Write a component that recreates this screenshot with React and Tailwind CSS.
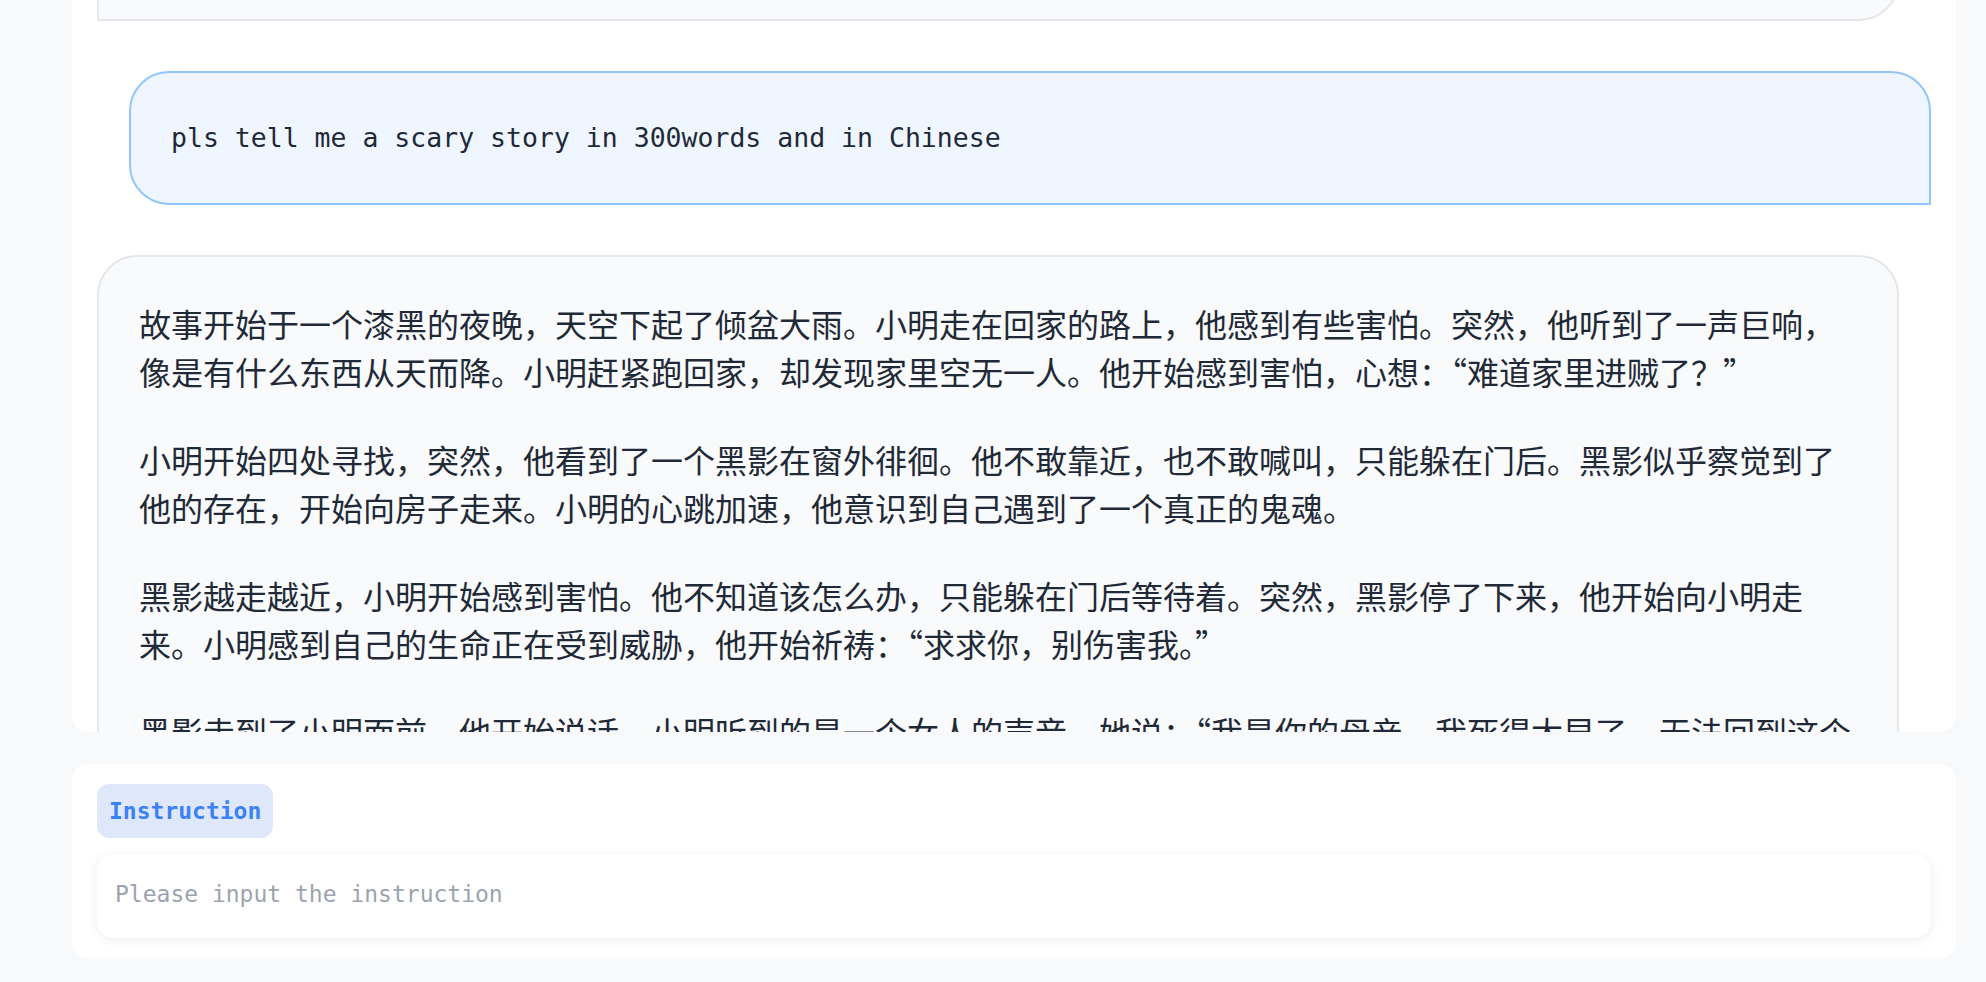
import React, { useState } from 'react';

const story = [
  '故事开始于一个漆黑的夜晚，天空下起了倾盆大雨。小明走在回家的路上，他感到有些害怕。突然，他听到了一声巨响，像是有什么东西从天而降。小明赶紧跑回家，却发现家里空无一人。他开始感到害怕，心想：“难道家里进贼了？”',
  '小明开始四处寻找，突然，他看到了一个黑影在窗外徘徊。他不敢靠近，也不敢喊叫，只能躲在门后。黑影似乎察觉到了他的存在，开始向房子走来。小明的心跳加速，他意识到自己遇到了一个真正的鬼魂。',
  '黑影越走越近，小明开始感到害怕。他不知道该怎么办，只能躲在门后等待着。突然，黑影停了下来，他开始向小明走来。小明感到自己的生命正在受到威胁，他开始祈祷：“求求你，别伤害我。”',
  '黑影走到了小明面前，他开始说话。小明听到的是一个女人的声音。她说：“我是你的母亲，我死得太早了，无法回到这个世界。我只是想再看你一眼。”小明愣住了，泪水从他的眼中流了下来。',
];

const App = () => {
  const [instruction, setInstruction] = useState('');

  return (
    <div className="h-[982px] bg-[#f8f9fb] pl-[72px] pr-[30px] flex flex-col overflow-hidden">
      {/* chat history, scrolled */}
      <div className="h-[732px] shrink-0 bg-white rounded-b-[16px] overflow-hidden">
        <div className="flex flex-col gap-[50px] px-[25px] -mt-[200px]">
          <div className="h-[221px] mr-[32px] bg-[#f9fafb] border-2 border-[#e5e7eb] rounded-[40px] rounded-bl-none" />

          <div className="ml-[32px] bg-[#eff6ff] border-2 border-[#93c5fd] rounded-[40px] rounded-br-none px-[40px] py-[44px]">
            <p className="text-[26.5px] leading-[42px] text-[#1f2937] font-['DejaVu_Sans_Mono',monospace]">
              pls tell me a scary story in 300words and in Chinese
            </p>
          </div>

          <div className="mr-[32px] bg-[#f9fafb] border-2 border-[#e5e7eb] rounded-[40px] rounded-bl-none pl-[40px] pr-[44px] pt-[42px] pb-[40px]">
            {story.map((para, i) => (
              <p
                key={i}
                className="mb-[40px] text-[32px] leading-[48px] text-[#1f2937] font-['Noto_Sans_CJK_SC',sans-serif]"
              >
                {para}
              </p>
            ))}
          </div>
        </div>
      </div>

      {/* instruction input */}
      <div className="mt-[32px] bg-white rounded-[16px] px-[25px] pt-[20px] pb-[20px] flex flex-col gap-[16px]">
        <div className="self-start bg-[#dfe8fb] rounded-[12px] px-[12px] py-[12px]">
          <span className="block text-[23px] leading-[30px] font-bold text-[#3b82f6] font-['DejaVu_Sans_Mono',monospace]">
            Instruction
          </span>
        </div>
        <input
          autoFocus
          value={instruction}
          onChange={(e) => setInstruction(e.target.value)}
          placeholder="Please input the instruction"
          className="h-[84px] w-full bg-white rounded-[16px] px-[18px] pb-[4px] text-[23px] text-[#1f2937] placeholder:text-[#9ca3af] caret-[#60a5fa] outline-none shadow-[0_2px_10px_rgba(0,0,0,0.08)] font-['DejaVu_Sans_Mono',monospace]"
        />
      </div>
    </div>
  );
};

export default App;
